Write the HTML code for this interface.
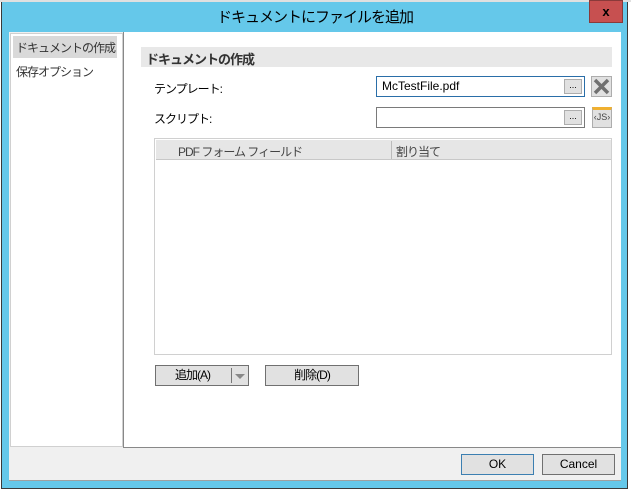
<!DOCTYPE html>
<html><head><meta charset="utf-8"><style>
*{margin:0;padding:0;box-sizing:border-box}
body{width:631px;height:491px;background:#fff;position:relative;overflow:hidden;font-family:"Liberation Sans","Noto Sans CJK JP",sans-serif;font-size:12px;color:#000}
.a{position:absolute;white-space:nowrap}
.btn{position:absolute;background:#e1e1e1;border:1px solid #707070;text-align:center;font-size:12px;line-height:19px}
.j{letter-spacing:-1px}
</style></head><body>
<div class="a" style="left:1px;top:2px;width:627px;height:487px;background:#65c8ea;border:1px solid #3a3a3a;border-top:none"></div>
<div class="a" style="left:0;top:0;width:631px;height:2px;background:#e0e0e0"></div>
<div class="a j" style="left:2px;top:6px;width:626px;text-align:center;font-size:15px;color:#000">ドキュメントにファイルを追加</div>
<div class="a" style="left:589px;top:0;width:34px;height:23px;background:#c75050;border:1px solid #8a3a3a;color:#000;font-weight:bold;font-size:13px;text-align:center;line-height:21px">x</div>
<div class="a" style="left:9px;top:32px;width:612px;height:449px;background:#f0f0f0;border-bottom:1px solid #a0a0a0"></div>
<div class="a" style="left:10px;top:33px;width:113px;height:414px;background:#fff;border:1px solid #d0d0d0"></div>
<div class="a" style="left:13px;top:36px;width:104px;height:22px;background:#d9d9d9"></div>
<div class="a j" style="left:16px;top:39px;font-size:12px;color:#333">ドキュメントの作成</div>
<div class="a j" style="left:16px;top:63px;font-size:12px;color:#333">保存オプション</div>
<div class="a" style="left:123px;top:32px;width:498px;height:416px;background:#fff;border-left:1px solid #888;border-bottom:1px solid #888"></div>
<div class="a" style="left:141px;top:47px;width:471px;height:20px;background:#e8e8e8"></div>
<div class="a j" style="left:146px;top:49px;font-weight:bold;font-size:13px;color:#333">ドキュメントの作成</div>
<div class="a j" style="left:154px;top:80px">テンプレート:</div>
<div class="a" style="left:376px;top:76px;width:209px;height:21px;border:1px solid #2a6ea8;background:#fff"></div>
<div class="a" style="left:382px;top:79px;font-size:12px">McTestFile.pdf</div>
<div class="a" style="left:564px;top:79px;width:18px;height:15px;background:#e1e1e1;border:1px solid #adadad;font-size:9px;text-align:center;line-height:11px">...</div>
<div class="a" style="left:591px;top:76px;width:21px;height:21px;background:#e1e1e1;border:1px solid #adadad"><svg width="19" height="19" viewBox="0 0 19 19"><path d="M3 3L16 16M16 3L3 16" stroke="#707070" stroke-width="3.5"/></svg></div>
<div class="a j" style="left:154px;top:110px">スクリプト:</div>
<div class="a" style="left:376px;top:107px;width:209px;height:21px;border:1px solid #7a7a7a;background:#fff"></div>
<div class="a" style="left:564px;top:110px;width:18px;height:15px;background:#e1e1e1;border:1px solid #adadad;font-size:9px;text-align:center;line-height:11px">...</div>
<div class="a" style="left:592px;top:107px;width:20px;height:21px;background:#e1e1e1;border:1px solid #adadad;border-top:3px solid #f0b030;font-size:9px;text-align:center;line-height:15px;color:#444">‹JS›</div>
<div class="a" style="left:154px;top:138px;width:458px;height:217px;border:1px solid #d0d0d0;background:#fff"></div>
<div class="a" style="left:156px;top:140px;width:455px;height:20px;background:#e6e6e6;border-bottom:1px solid #c8c8c8"></div>
<div class="a" style="left:391px;top:141px;width:1px;height:18px;background:#bbb"></div>
<div class="a j" style="left:178px;top:143px;color:#444">PDF フォーム フィールド</div>
<div class="a j" style="left:396px;top:143px;color:#444">割り当て</div>
<div class="btn j" style="left:155px;top:365px;width:94px;height:21px;text-align:left;padding-left:19px">追加(A)</div>
<div class="a" style="left:231px;top:368px;width:1px;height:15px;background:#777"></div>
<div class="a" style="left:235px;top:374px;width:0;height:0;border-left:5px solid transparent;border-right:5px solid transparent;border-top:5px solid #888"></div>
<div class="btn j" style="left:265px;top:365px;width:94px;height:21px">削除(D)</div>
<div class="btn" style="left:461px;top:454px;width:73px;height:21px;border-color:#3c7fb1">OK</div>
<div class="btn" style="left:542px;top:454px;width:73px;height:21px">Cancel</div>
</body></html>
